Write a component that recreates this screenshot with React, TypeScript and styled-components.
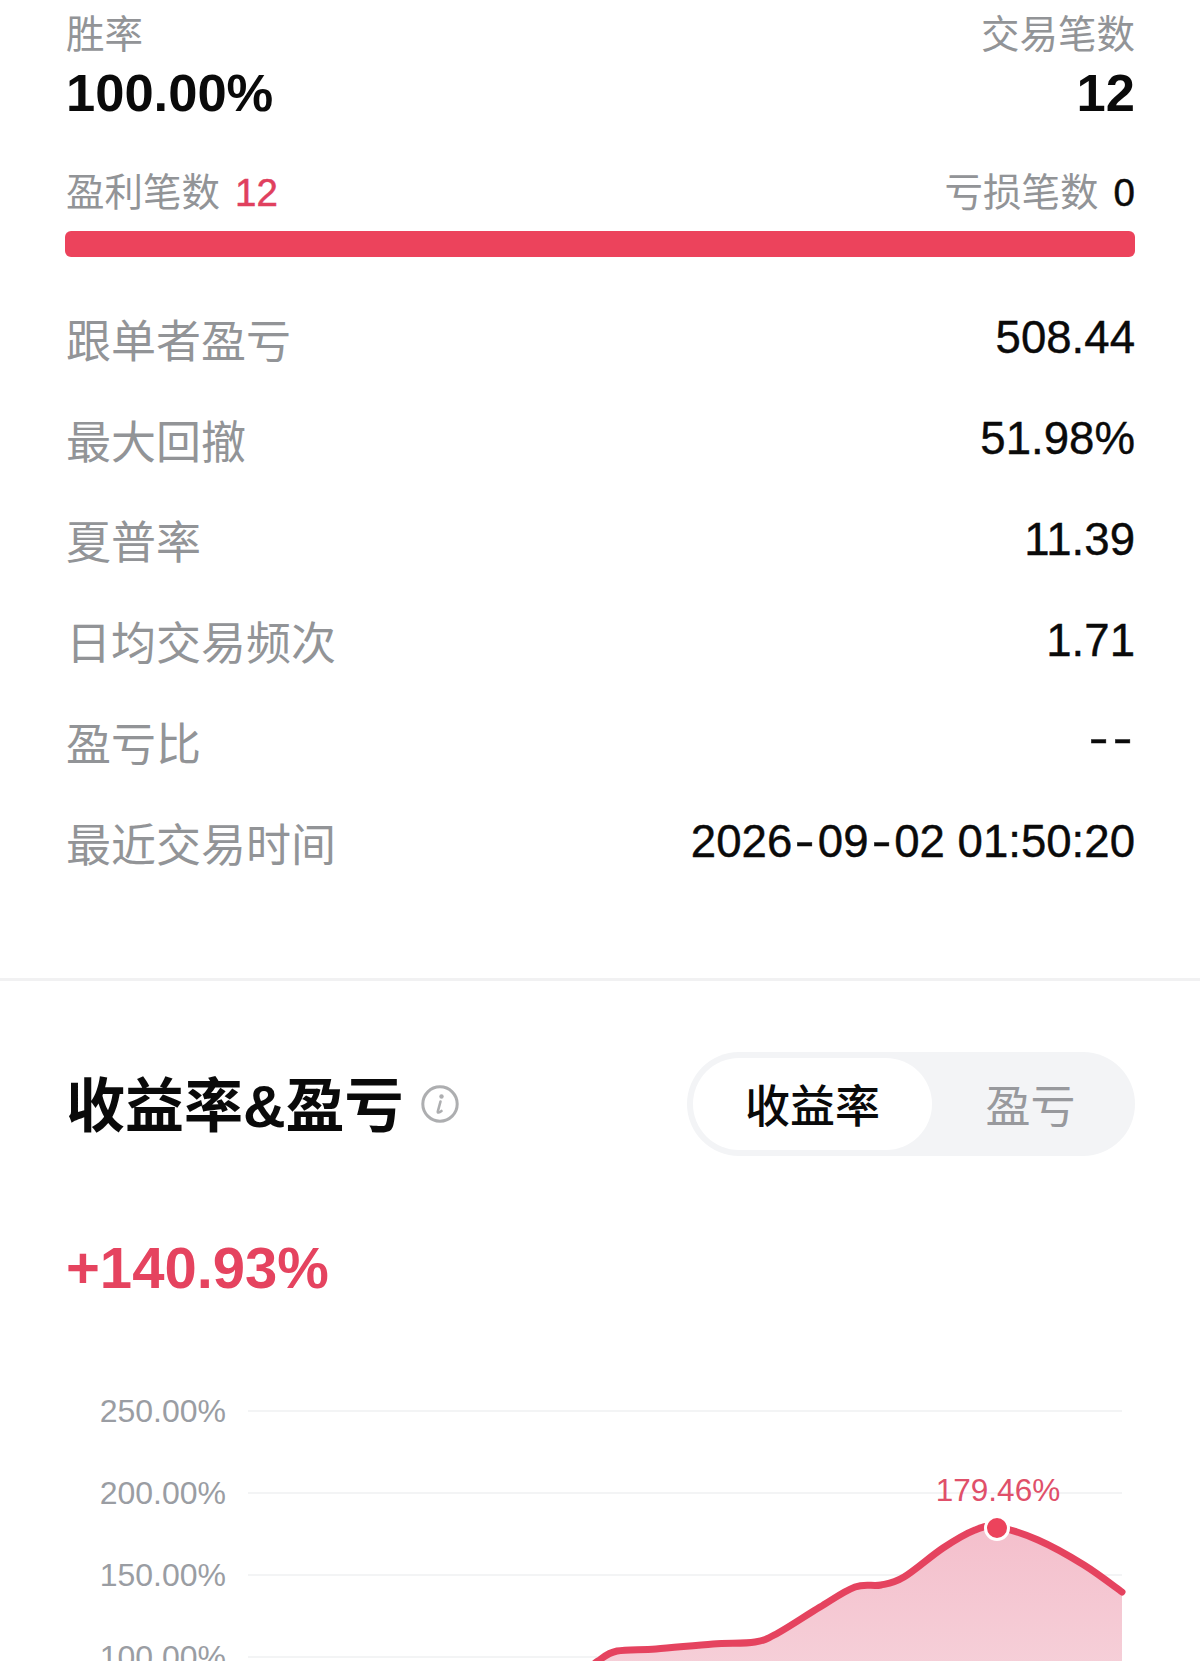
import React from "react";
import styled, { createGlobalStyle } from "styled-components";

const Global = createGlobalStyle`
  html, body { margin: 0; padding: 0; background: #fff; }
  body { font-family: "Liberation Sans", "Noto Sans CJK SC", sans-serif; }
`;
const Page = styled.div`
  width: 1200px;
  height: 1661px;
  overflow: hidden;
  background: #fff;
  position: relative;
`;
const Section = styled.section<{ $top?: number }>`
  padding: ${(p) => p.$top ?? 0}px 65px 0 66px;
`;
const SplitRow = styled.div`
  display: flex;
  justify-content: space-between;
  align-items: center;
`;
const StatColumn = styled.div<{ $right?: boolean }>`
  display: flex;
  flex-direction: column;
  align-items: ${(p) => (p.$right ? "flex-end" : "flex-start")};
`;
const StatLabel = styled.div`
  font-size: 38.5px;
  line-height: 48px;
  color: #929497;
`;
const StatValue = styled.div`
  font-size: 52.5px;
  line-height: 68px;
  font-weight: 700;
  color: #0a0a0a;
`;
const CountRow = styled(SplitRow)`
  margin-top: 41px;
  height: 50px;
`;
const CountGroup = styled.div`
  display: flex;
  align-items: center;
  gap: 15px;
`;
const Count = styled.span<{ $win?: boolean }>`
  font-size: 38.5px;
  color: ${(p) => (p.$win ? "#e0405e" : "#0a0a0a")};
  -webkit-text-stroke: 0.5px ${(p) => (p.$win ? "#e0405e" : "#0a0a0a")};
`;
const Bar = styled.div`
  height: 26px;
  margin: 13px 0 0 -1px;
  border-radius: 6px;
  background: #ec435c;
`;
const Rows = styled.div`
  margin-top: 31px;
`;
const DataRow = styled(SplitRow)`
  height: 100.8px;
`;
const RowLabel = styled.span`
  font-size: 45px;
  color: #929497;
`;
const RowValue = styled.span`
  font-size: 45.6px;
  color: #0a0a0a;
  -webkit-text-stroke: 0.4px #0a0a0a;
`;
const Hyphen = styled.span<{ $pair?: boolean }>`
  display: inline-block;
  transform: ${(p) => (p.$pair ? "translateY(-3px) scaleX(1.3)" : "scaleX(1.3)")};
  margin: 0 ${(p) => (p.$pair ? "4.5px" : "5.2px")};
`;
const Divider = styled.hr`
  margin: 85px 0 0;
  border: 0;
  height: 3px;
  background: #f1f1f2;
`;
const ChartHead = styled(SplitRow)`
  margin-top: 61px;
  height: 104px;
`;
const TitleGroup = styled.div`
  display: flex;
  align-items: center;
  gap: 17px;
`;
const Title = styled.h2`
  margin: 7px 0 0;
  font-size: 59px;
  line-height: 70px;
  font-weight: 700;
  color: #0a0a0a;
`;
const InfoIcon = styled.svg`
  width: 38px;
  height: 38px;
`;
const Toggle = styled.div`
  width: 448px;
  height: 104px;
  box-sizing: border-box;
  padding: 6px;
  display: flex;
  border-radius: 52px;
  background: #f3f4f6;
`;
const ToggleItem = styled.div<{ $active?: boolean }>`
  width: ${(p) => (p.$active ? "239px" : "197px")};
  display: flex;
  align-items: center;
  justify-content: center;
  border-radius: 46px;
  font-size: 45px;
  font-weight: ${(p) => (p.$active ? 500 : 400)};
  color: ${(p) => (p.$active ? "#0a0a0a" : "#98999d")};
  background: ${(p) => (p.$active ? "#fff" : "transparent")};
`;
const Total = styled.div`
  margin-top: 77px;
  font-size: 58px;
  line-height: 70px;
  font-weight: 700;
  color: #e5435f;
`;
const ChartSvg = styled.svg`
  display: block;
  margin-top: 77px;
  width: 1200px;
  height: 300px;
`;
const AxisText = styled.text`
  font-size: 32px;
  fill: #9a9da3;
  text-anchor: end;
`;
const PeakText = styled.text`
  font-size: 31.5px;
  fill: #e0506a;
  text-anchor: middle;
`;

// Chart space: the SVG starts at y = 1380 on the page.
const Y0 = 1380;
const points: [number, number][] = [
  [585, 1672], [598, 1661], [617, 1651], [656, 1649], [713, 1644], [755, 1642], [778, 1633],
  [820, 1607], [855, 1587], [881, 1585], [904, 1577], [943, 1548], [975, 1530], [997, 1527],
  [1038, 1540], [1084, 1565], [1122, 1592],
];
function smooth(pts: [number, number][]) {
  let d = `M${pts[0][0]} ${pts[0][1] - Y0}`;
  for (let i = 0; i < pts.length - 1; i++) {
    const p0 = pts[Math.max(0, i - 1)];
    const p1 = pts[i];
    const p2 = pts[i + 1];
    const p3 = pts[Math.min(pts.length - 1, i + 2)];
    const c1x = p1[0] + (p2[0] - p0[0]) / 6;
    const c1y = p1[1] + (p2[1] - p0[1]) / 6 - Y0;
    const c2x = p2[0] - (p3[0] - p1[0]) / 6;
    const c2y = p2[1] - (p3[1] - p1[1]) / 6 - Y0;
    d += ` C${c1x} ${c1y} ${c2x} ${c2y} ${p2[0]} ${p2[1] - Y0}`;
  }
  return d;
}
const line = smooth(points);
const area = `${line} L1122 320 L585 320 Z`;
const grid = [
  ["250.00%", 31],
  ["200.00%", 113],
  ["150.00%", 195],
  ["100.00%", 277],
] as const;
const rows: [string, React.ReactNode][] = [
  ["跟单者盈亏", "508.44"],
  ["最大回撤", "51.98%"],
  ["夏普率", "11.39"],
  ["日均交易频次", "1.71"],
  ["盈亏比", <><Hyphen $pair>-</Hyphen><Hyphen $pair>-</Hyphen></>],
  ["最近交易时间", <>2026<Hyphen>-</Hyphen>09<Hyphen>-</Hyphen>02 01:50:20</>],
];

export default function App() {
  return (
    <Page>
      <Global />
      <Section $top={11}>
        <SplitRow>
          <StatColumn>
            <StatLabel>胜率</StatLabel>
            <StatValue>100.00%</StatValue>
          </StatColumn>
          <StatColumn $right>
            <StatLabel>交易笔数</StatLabel>
            <StatValue>12</StatValue>
          </StatColumn>
        </SplitRow>
        <CountRow>
          <CountGroup>
            <StatLabel>盈利笔数</StatLabel>
            <Count $win>12</Count>
          </CountGroup>
          <CountGroup>
            <StatLabel>亏损笔数</StatLabel>
            <Count>0</Count>
          </CountGroup>
        </CountRow>
        <Bar />
        <Rows>
          {rows.map(([k, v]) => (
            <DataRow key={k}>
              <RowLabel>{k}</RowLabel>
              <RowValue>{v}</RowValue>
            </DataRow>
          ))}
        </Rows>
      </Section>
      <Divider />
      <Section $top={10}>
        <ChartHead>
          <TitleGroup>
            <Title>收益率&盈亏</Title>
            <InfoIcon viewBox="0 0 38 38" fill="none">
              <circle cx="19" cy="19" r="17.2" stroke="#adaeb0" strokeWidth="3" />
              <circle cx="20.5" cy="11.5" r="2.2" fill="#adaeb0" />
              <path d="M19.5 16.5 L16.8 26.5 C16.5 28 18 28 20.5 26" stroke="#adaeb0" strokeWidth="2.6" strokeLinecap="round" />
            </InfoIcon>
          </TitleGroup>
          <Toggle>
            <ToggleItem $active>收益率</ToggleItem>
            <ToggleItem>盈亏</ToggleItem>
          </Toggle>
        </ChartHead>
        <Total>+140.93%</Total>
      </Section>
      <ChartSvg viewBox="0 0 1200 300">
        <defs>
          <linearGradient id="fill" x1="0" y1="0" x2="0" y2="1">
            <stop offset="0" stopColor="#f4bfcc" />
            <stop offset="1" stopColor="#f6d3db" />
          </linearGradient>
        </defs>
        {grid.map(([t, y]) => (
          <g key={t}>
            <line x1="248" x2="1122" y1={y} y2={y} stroke="#f3f4f5" strokeWidth="2" />
            <AxisText x="226" y={y + 11}>{t}</AxisText>
          </g>
        ))}
        <path d={area} fill="url(#fill)" />
        <path d={line} fill="none" stroke="#e5435f" strokeWidth="7" strokeLinecap="round" strokeLinejoin="round" />
        <PeakText x="998" y="121">179.46%</PeakText>
        <circle cx="997" cy="148" r="11.5" fill="#ec435c" stroke="#fff" strokeWidth="3" />
      </ChartSvg>
    </Page>
  );
}
